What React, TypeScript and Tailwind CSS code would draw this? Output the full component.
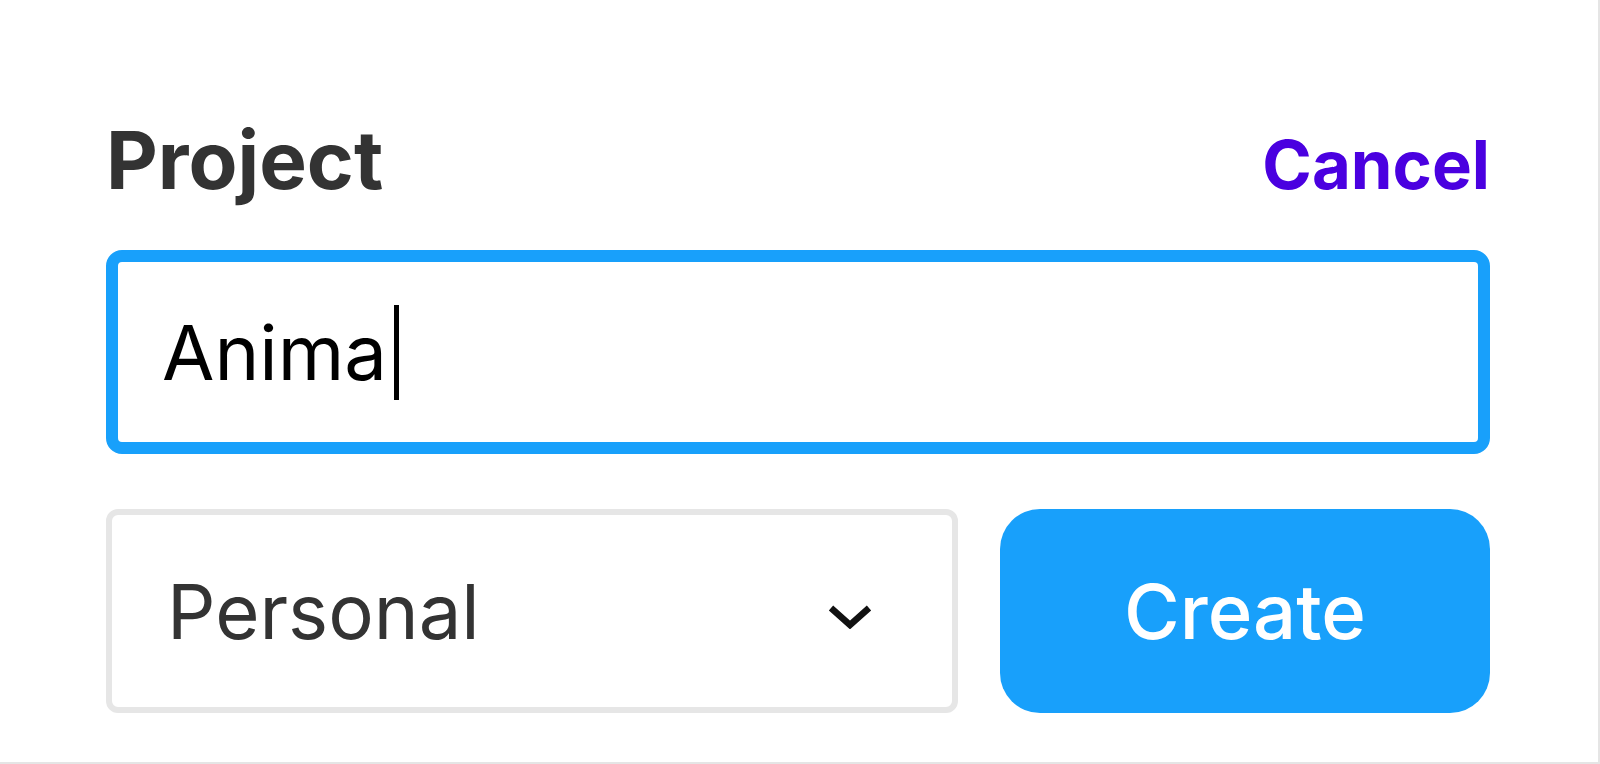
export default function App() {
    return (
        <div
            className="box-border h-[764px] w-[1600px] overflow-hidden border-r-2 border-b-2 border-[#e5e5e5] bg-white pl-[106px] pr-[108px] pt-[120px]"
            style={{ fontFamily: "Inter, 'Noto Sans', sans-serif" }}
        >
            {/* Header */}
            <div className="flex items-baseline justify-between">
                <h1 className="text-[80px] font-bold leading-none text-[#333333]">Project</h1>
                <button className="text-[67px] font-bold leading-none text-[#4a00e0]">Cancel</button>
            </div>

            {/* Name input */}
            <div className="mt-[50px] box-border flex h-[204px] items-center rounded-[16px] border-[12px] border-[#18a0fb] pl-[44px]">
                <span className="text-[76px] leading-none text-black">Anima</span>
                <span className="ml-[7px] h-[95px] w-[5px] bg-black" />
            </div>

            {/* Team select + create */}
            <div className="mt-[55px] flex gap-[42px]">
                <div className="box-border flex h-[204px] w-[852px] items-center justify-between rounded-[12px] border-[6px] border-[#e6e6e6] pl-[55px] pr-[80px]">
                    <span className="text-[76px] leading-none text-[#333333]">Personal</span>
                    <svg width="44" height="24" viewBox="0 0 44 24" className="mt-[12px]">
                        <polyline
                            points="3,3 22,20 41,3"
                            fill="none"
                            stroke="#111111"
                            strokeWidth="6.5"
                            strokeLinejoin="miter"
                        />
                    </svg>
                </div>
                <button className="flex h-[204px] flex-1 items-center justify-center rounded-[40px] bg-[#18a0fb] text-[76px] font-medium leading-none text-white">
                    Create
                </button>
            </div>
        </div>
    );
}
